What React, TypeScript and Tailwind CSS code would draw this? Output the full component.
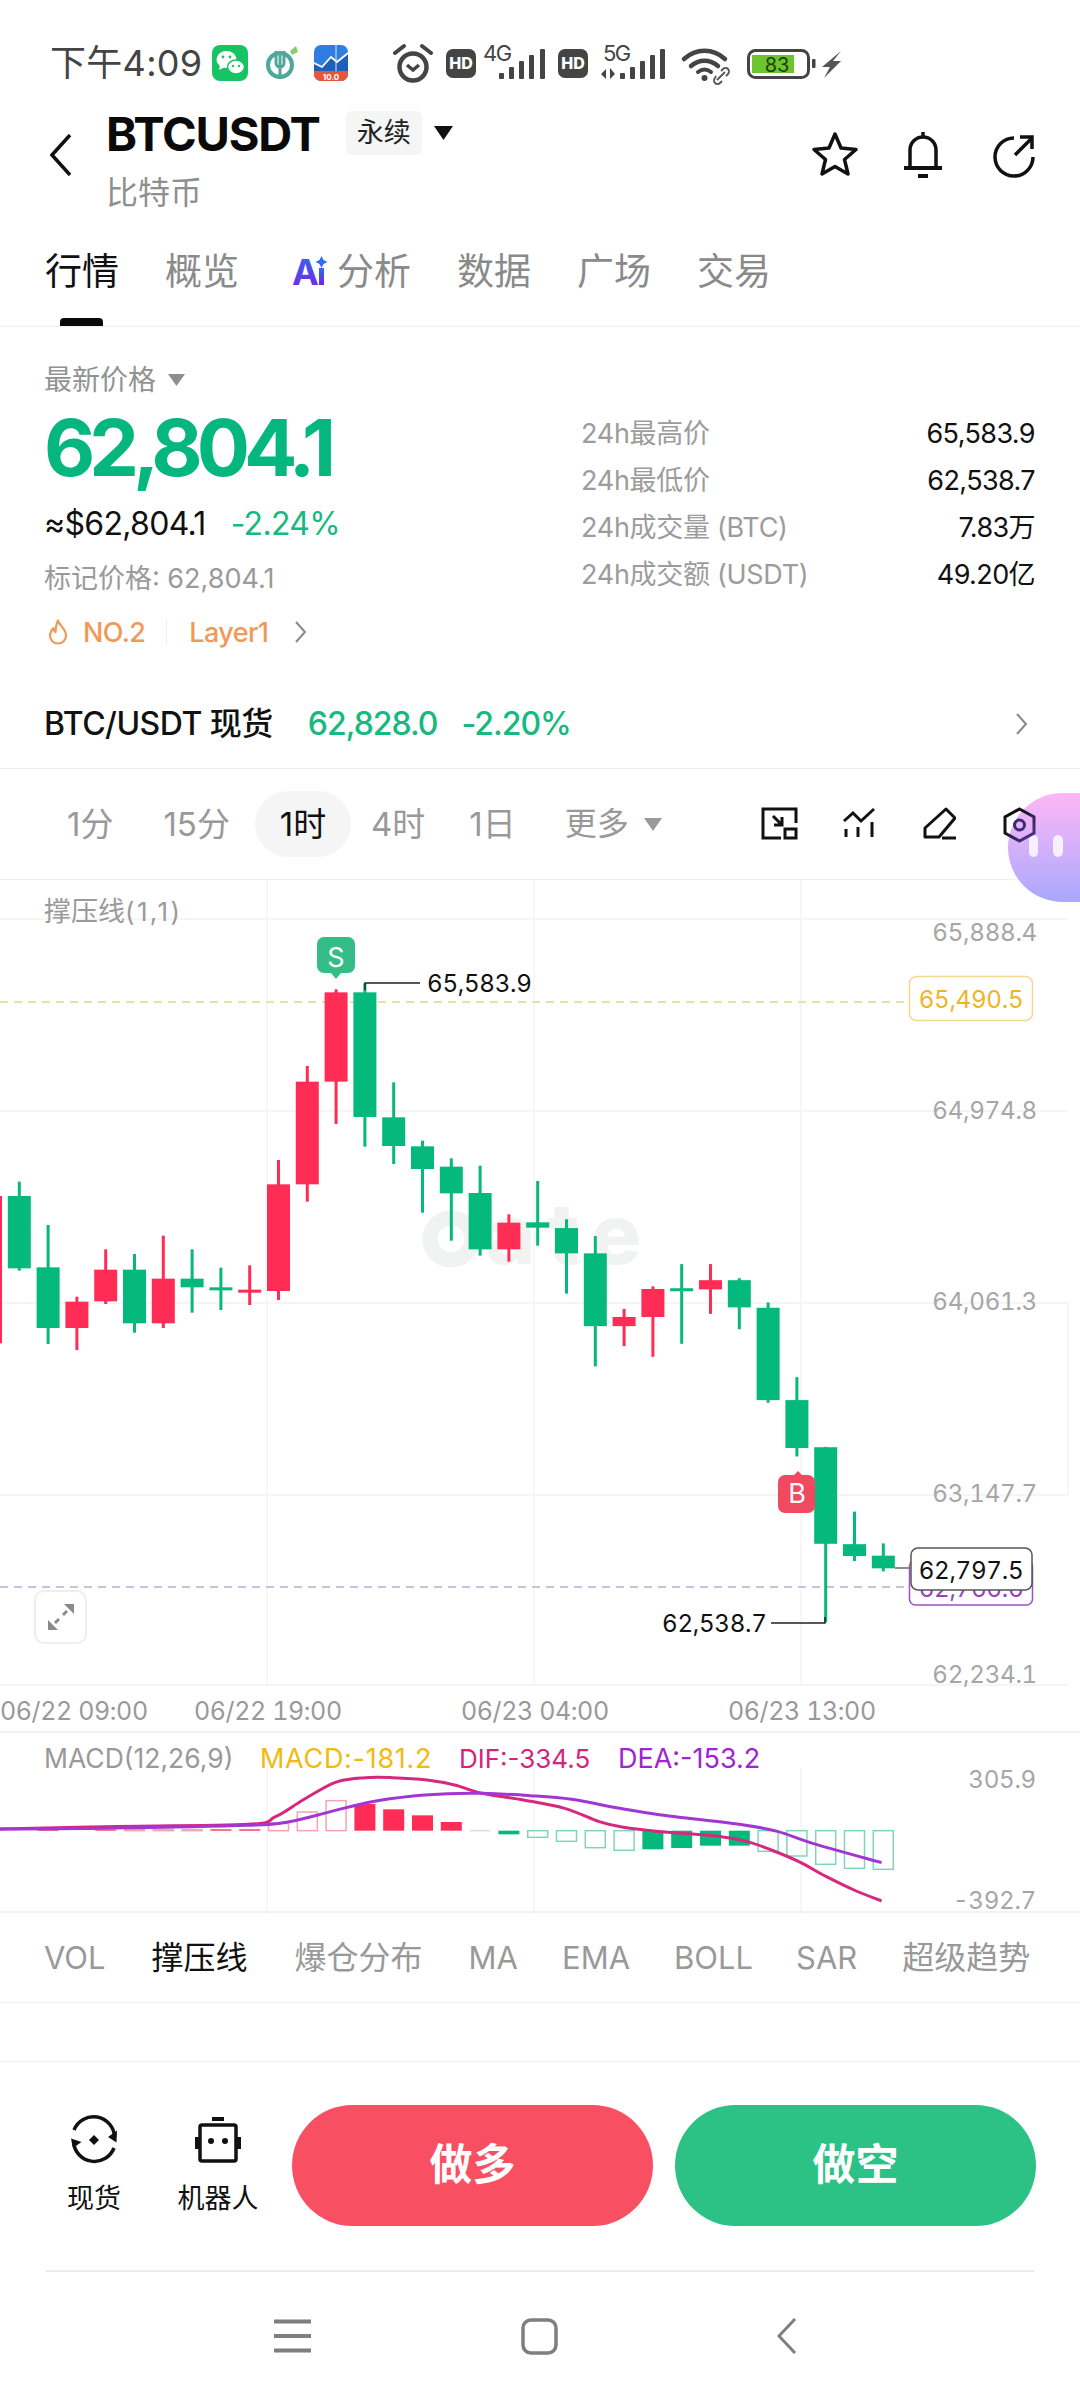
import React from "react";

const y3 = (z: number) => 900 + z / 3;
const y4 = (z: number) => 1130 + z / 2.61;
const cx = (i: number) => 19.3 + 28.8 * i;
const GREEN = "#05b87b";
const RED = "#ff2c55";

type C = [number, "g" | "r", number, number, number, number];
const raw3: C[] = [
  [-1, "r", 888, 888, 1330, 1345],
  [0, "g", 845, 888, 1105, 1112],
  [1, "g", 975, 1102, 1284, 1332],
  [2, "r", 1190, 1205, 1284, 1350],
  [3, "r", 1048, 1109, 1204, 1212],
  [4, "g", 1062, 1109, 1270, 1298],
  [5, "r", 1007, 1136, 1270, 1284],
  [6, "g", 1048, 1136, 1162, 1238],
  [7, "g", 1103, 1162, 1169, 1230],
  [8, "r", 1096, 1169, 1178, 1215],
  [9, "r", 780, 853, 1173, 1200],
  [10, "r", 498, 545, 853, 905],
  [11, "r", 268, 277, 545, 672],
  [12, "g", 250, 277, 651, 740],
  [13, "g", 547, 652, 738, 792],
  [14, "g", 722, 739, 807, 938],
  [15, "g", 775, 800, 880, 1022],
  [16, "g", 797, 879, 1048, 1067],
  [17, "r", 943, 968, 1048, 1085],
  [18, "g", 843, 967, 983, 1037],
];
const raw4: C[] = [
  [19, "g", 233, 256, 322, 427],
  [20, "g", 277, 322, 512, 617],
  [21, "r", 467, 488, 512, 564],
  [22, "r", 408, 415, 488, 592],
  [23, "g", 350, 413, 420, 558],
  [24, "r", 350, 392, 416, 480],
  [25, "g", 387, 392, 463, 520],
  [26, "g", 450, 464, 705, 712],
  [27, "g", 645, 705, 830, 852],
  [28, "g", 827, 828, 1080, 1285],
  [29, "g", 996, 1081, 1112, 1125],
  [30, "g", 1079, 1111, 1144, 1152],
];
const candles = [
  ...raw3.map(([i, c, a, b, d, e]) => ({ i, c, a: y3(a), b: y3(b), d: y3(d), e: y3(e) })),
  ...raw4.map(([i, c, a, b, d, e]) => ({ i, c, a: y4(a), b: y4(b), d: y4(d), e: y4(e) })),
];

const my = (z: number) => 1680 + z / 3;
const mx = (z: number) => z / 1.452;
const line = (pts: number[][]) => {
  const p = pts.map(([x, y]) => [mx(x), my(y)]);
  let d = `M${p[0][0]} ${p[0][1]}`;
  for (let i = 0; i < p.length - 1; i++) {
    const p0 = p[Math.max(0, i - 1)], p1 = p[i], p2 = p[i + 1], p3 = p[Math.min(p.length - 1, i + 2)];
    d += ` C${p1[0] + (p2[0] - p0[0]) / 6} ${p1[1] + (p2[1] - p0[1]) / 6} ${p2[0] - (p3[0] - p1[0]) / 6} ${p2[1] - (p3[1] - p1[1]) / 6} ${p2[0]} ${p2[1]}`;
  }
  return d;
};
const dif = line([[0,447],[150,440],[360,433],[400,410],[440,360],[487,307],[530,293],[570,293],[620,300],[660,315],[700,340],[760,360],[820,385],[870,425],[905,442],[960,455],[1040,468],[1085,485],[1120,510],[1160,545],[1200,590],[1240,630],[1280,663]]);
const dea = line([[0,447],[150,445],[360,436],[420,425],[480,395],[540,365],[600,348],[650,341],[700,340],[770,347],[830,358],[900,385],[960,405],[1080,435],[1130,455],[1180,490],[1280,548]]);

const bars: [number, number, boolean][] = [
  [-1, 450, true],[1, 450, true],[3, 449, true],[4, 448, false],[5, 448, false],[6, 449, false],[7, 448, true],[8, 448, true],
  [9, 430, false],[10, 396, false],[11, 362, false],[12, 372, true],[13, 388, true],[14, 406, true],[15, 426, true],
  [17, 463, true],[18, 472, false],[19, 484, false],[20, 503, false],[21, 511, false],[22, 508, true],[23, 504, true],[24, 497, true],[25, 497, true],
  [26, 514, false],[27, 528, false],[28, 553, false],[29, 565, false],[30, 568, false],
];

function Chart() {
  const hLines = [919, 1111, 1303, 1495, 1685];
  const num = { fontSize: 24.2, letterSpacing: -0.3, className: "tabular-nums" };
  return (
    <svg width="1080" height="1033" viewBox="0 880 1080 1033" className="block shrink-0 overflow-visible">
      {hLines.map((y) => <line key={y} x1="0" x2="1068" y1={y} y2={y} stroke="#f2f2f2" strokeWidth="1.5" />)}
      {[267, 534, 801].map((x) => <line key={x} x1={x} x2={x} y1="880" y2="1685" stroke="#f4f4f4" strokeWidth="1.5" />)}
      {[267, 534, 801].map((x) => <line key={x} x1={x} x2={x} y1="1768" y2="1913" stroke="#f4f4f4" strokeWidth="1.5" />)}
      <line x1="1068" x2="1068" y1="1303" y2="1495" stroke="#f4f4f4" strokeWidth="1.5" />
      <line x1="0" x2="1080" y1="1732" y2="1732" stroke="#eeeeee" strokeWidth="1.5" />
      <line x1="0" x2="1080" y1="1912" y2="1912" stroke="#eeeeee" strokeWidth="1.5" />

      {/* watermark */}
      <circle cx="451" cy="1239" r="21" fill="none" stroke="#f1f2f2" strokeWidth="15" />
      <text x="486" y="1264" fontSize="84" fontWeight="800" letterSpacing="12" fill="#f1f2f2">ate</text>

      <text x="44" y="921" fontSize="27" fill="#9a9a9a">撑压线<tspan fontSize="26" letterSpacing="2.400">(1,1)</tspan></text>
      <line x1="0" x2="908" y1="1002" y2="1002" stroke="#dada84" strokeWidth="1.5" strokeDasharray="8 6" />
      <line x1="0" x2="908" y1="1587" y2="1587" stroke="#c9a5d8" strokeWidth="1.5" strokeDasharray="8 6" />
      <line x1="895" x2="910" y1="1568" y2="1568" stroke="#666" strokeWidth="1.5" />

      {candles.map((c) => {
        const col = c.c === "g" ? GREEN : RED;
        const x = cx(c.i);
        return (
          <g key={c.i}>
            <rect x={x - 1.5} y={c.a} width="3" height={c.e - c.a} fill={col} />
            <rect x={x - 11.5} y={c.b} width="23" height={Math.max(3, c.d - c.b)} fill={col} />
          </g>
        );
      })}

      {/* S marker */}
      <path d="M324 937h24a7 7 0 0 1 7 7v22a7 7 0 0 1-7 7h-7l-5 6-5-6h-7a7 7 0 0 1-7-7v-22a7 7 0 0 1 7-7z" fill="#36bd87" />
      <text x="336" y="967" textAnchor="middle" fontSize="27" fill="#fff">S</text>
      <path d="M365 990v-7h55" fill="none" stroke="#222" strokeWidth="1.5" />
      <text x="427" y="992" {...num} fill="#111">65,583.9</text>

      {/* B marker */}
      <path d="M785 1475h9l4-4 4 4h6a7 7 0 0 1 7 7v24a7 7 0 0 1-7 7h-23a7 7 0 0 1-7-7v-24a7 7 0 0 1 7-7z" fill="#ef4a60" />
      <text x="797" y="1503" textAnchor="middle" fontSize="27" fill="#fff">B</text>
      <path d="M825 1617v6h-54" fill="none" stroke="#222" strokeWidth="1.5" />
      <text x="662" y="1632" {...num} fill="#111">62,538.7</text>

      {/* axis labels */}
      {([["65,888.4", 941], ["64,974.8", 1119], ["64,061.3", 1310], ["63,147.7", 1502], ["62,234.1", 1683]] as [string, number][]).map(([t, y]) => (
        <text key={t} x="1037" y={y} textAnchor="end" {...num} fill="#a6a6a6">{t}</text>
      ))}

      <rect x="909.5" y="976.5" width="123" height="44" rx="7" fill="#fff" stroke="#f5d88f" strokeWidth="1.5" />
      <text x="971" y="1008" textAnchor="middle" {...num} fill="#f0b429">65,490.5</text>

      <rect x="909.5" y="1560" width="123" height="45" rx="6" fill="#fff" stroke="#a04fc4" strokeWidth="1.5" />
      <text x="971" y="1597" textAnchor="middle" {...num} fill="#9a3fc0">62,766.6</text>
      <rect x="911" y="1548" width="121" height="42" rx="7" fill="#fff" stroke="#555" strokeWidth="1.5" />
      <text x="971" y="1579" textAnchor="middle" {...num} fill="#111">62,797.5</text>

      {/* time axis */}
      {([["06/22 09:00", 0], ["06/22 19:00", 194], ["06/23 04:00", 461], ["06/23 13:00", 728]] as [string, number][]).map(([t, x]) => (
        <text key={t} x={x} y="1720" fontSize="25" letterSpacing="-0.4" className="tabular-nums" fill="#999">{t}</text>
      ))}

      {/* MACD */}
      <text x="44" y="1768" fontSize="26.500" fill="#999">MACD(12,26,9)</text>
      <text x="260" y="1768" fontSize="27" letterSpacing="0.7" fill="#f2b90f">MACD:-181.2</text>
      <text x="459" y="1768" fontSize="26" fill="#d4247f">DIF:-334.5</text>
      <text x="618" y="1768" fontSize="27" fill="#a024d0">DEA:-153.2</text>
      <text x="1036" y="1788" textAnchor="end" {...num} fill="#a6a6a6">305.9</text>
      <text x="1036" y="1909" textAnchor="end" {...num} fill="#a6a6a6">-392.7</text>
      <line x1={cx(16) - 10} x2={cx(16) + 10} y1={my(452)} y2={my(452)} stroke="#ddd" strokeWidth="1.5" />
      {bars.map(([i, z, f]) => {
        const up = z < 452;
        const col = up ? RED : GREEN;
        const top = up ? my(z) : my(452);
        const h = Math.abs(my(z) - my(452));
        return f ? (
          <rect key={i} x={cx(i) - 10.5} y={top} width="21" height={h} fill={col} />
        ) : (
          <rect key={i} x={cx(i) - 10} y={top} width="20" height={h} fill="none" stroke={up ? "#f5a3b5" : "#7fd6b6"} strokeWidth="1.5" />
        );
      })}
      <path d={dif} fill="none" stroke="#d8277f" strokeWidth="3" />
      <path d={dea} fill="none" stroke="#a136d2" strokeWidth="3" />
    </svg>
  );
}

function StatusIcons() {
  const Bars = ({ xs }: { xs: number[] }) => (
    <>
      {xs.map((x, i) => {
        const h = [6, 12, 18, 24, 30][i];
        return <rect key={x} x={x} y={79 - h} width="5" height={h} rx="1" fill="#444" />;
      })}
    </>
  );
  return (
    <svg width="450" height="60" viewBox="393 35 450 60" className="block">
      <circle cx="413" cy="67" r="13.500" fill="none" stroke="#444" strokeWidth="4.500" />
      <path d="M407 65l6 5 6-5" fill="none" stroke="#444" strokeWidth="3.500" />
      <path d="M395 53l9-7M431 53l-9-7" stroke="#444" strokeWidth="4" strokeLinecap="round" />
      <rect x="446" y="49" width="30" height="29" rx="7" fill="#444" />
      <text x="461" y="69" textAnchor="middle" fontSize="16" fontWeight="800" fill="#fff">HD</text>
      <text x="483" y="61" fontSize="22" letterSpacing="-1.500" fill="#444">4G</text>
      <Bars xs={[499, 509, 519, 529, 540]} />
      <rect x="558" y="49" width="30" height="29" rx="7" fill="#444" />
      <text x="573" y="69" textAnchor="middle" fontSize="16" fontWeight="800" fill="#fff">HD</text>
      <text x="603" y="61" fontSize="22" letterSpacing="-1.500" fill="#444">5G</text>
      <path d="M601 74l5-5v10zM610 68v11l5-5z" fill="#444" />
      <Bars xs={[620, 630, 640, 650, 660]} />
      <path d="M684 59c12-11 29-11 41 0" fill="none" stroke="#444" strokeWidth="4.500" strokeLinecap="round" />
      <path d="M691 66c8-7 19-7 27 0" fill="none" stroke="#444" strokeWidth="4.500" strokeLinecap="round" />
      <path d="M698 72c4-3 9-3 13 0" fill="none" stroke="#444" strokeWidth="4" strokeLinecap="round" />
      <circle cx="704.500" cy="78" r="3" fill="#444" />
      <path d="M717 80l8-8M716 76l-1 2a3.500 3.500 0 0 0 5 5l2-2M726 76l2-2a3.500 3.500 0 0 0-5-5l-2 2" fill="none" stroke="#555" strokeWidth="1.800" />
      <rect x="748.500" y="50.500" width="60" height="27" rx="7" fill="#fff" stroke="#444" strokeWidth="3" />
      <rect x="752" y="55" width="42" height="18" fill="#6cc52c" />
      <text x="777" y="72" textAnchor="middle" fontSize="20" fill="#1f3d10">83</text>
      <rect x="812" y="59" width="3.500" height="9" rx="1" fill="#444" />
      <path d="M841 51l-19 16h8l-6 11 17-17h-8z" fill="#555" />
    </svg>
  );
}

function StatusBar() {
  return (
    <div className="flex h-[100px] shrink-0 items-center pl-[50px] pt-[26px] text-[36px] leading-none text-[#444]">
      <span className="w-[160px] whitespace-nowrap tracking-[0.3px]">下午4:09</span>
      <svg width="36" height="36" viewBox="0 0 36 36" className="ml-[2px] block">
        <rect width="36" height="36" rx="8" fill="#17c464" />
        <ellipse cx="14.500" cy="14.500" rx="10" ry="8.500" fill="#fff" />
        <path d="M8 20l-1 5 6-3z" fill="#fff" />
        <ellipse cx="24" cy="22" rx="8.500" ry="7" fill="#fff" stroke="#17c464" strokeWidth="1.500" />
        <circle cx="11" cy="12" r="1.400" fill="#17c464" />
        <circle cx="18" cy="12" r="1.400" fill="#17c464" />
        <circle cx="21" cy="21" r="1.200" fill="#17c464" />
        <circle cx="27" cy="21" r="1.200" fill="#17c464" />
      </svg>
      <svg width="34" height="36" viewBox="0 0 34 36" className="ml-[18px] block">
        <circle cx="14" cy="20" r="12" fill="none" stroke="#4fa99b" strokeWidth="4" />
        <path d="M10 6v12a4 4 0 0 0 8 0V6M14 6v28" fill="none" stroke="#4fa99b" strokeWidth="3" />
        <path d="M24 6l6-5 2 6-6 3z" fill="#8ecb6b" />
      </svg>
      <svg width="34" height="36" viewBox="0 0 34 36" className="ml-[14px] block">
        <rect width="34" height="36" rx="7" fill="#2f7de0" />
        <path d="M0 18l8 4 9-10 6 5 11-9v21H0z" fill="#1f5fb8" />
        <path d="M0 18l8 4 9-10 6 5 11-9" fill="none" stroke="#fff" strokeWidth="1.800" />
        <path d="M22 0v27" stroke="#dce9fb" strokeWidth="1" />
        <path d="M0 26h34v3a7 7 0 0 1-7 7H7a7 7 0 0 1-7-7z" fill="#e9553a" />
        <text x="17" y="34.500" textAnchor="middle" fontSize="8" fontWeight="700" fill="#fff">10.0</text>
      </svg>
      <div className="ml-[45px] mt-[4px]">
        <StatusIcons />
      </div>
    </div>
  );
}

function Header() {
  return (
    <div className="flex h-[120px] shrink-0 pl-[50px] pr-[45px]">
      <svg width="22" height="42" viewBox="0 0 22 42" className="mt-[34px] block shrink-0">
        <path d="M20 1L2 21l18 20" fill="none" stroke="#111" strokeWidth="3.500" />
      </svg>
      <div className="ml-[34px] flex flex-col">
        <div className="mt-[10px] flex h-[46px] items-center">
          <span className="text-[47px] font-bold leading-none tracking-[-1.2px] text-[#0a0a0a]">BTCUSDT</span>
          <span className="ml-[26px] flex h-[44px] w-[76px] items-center justify-center rounded-[6px] bg-[#f5f5f5] text-[27px] text-[#222]">永续</span>
          <svg width="19" height="14" viewBox="0 0 19 14" className="ml-[12px] block"><path d="M0 0h19L9.500 14z" fill="#111" /></svg>
        </div>
        <span className="mt-[17px] text-[32px] leading-[40px] text-[#8f8f8f]">比特币</span>
      </div>
      <div className="ml-auto mt-[30px] flex items-start">
        <svg width="48" height="48" viewBox="0 0 48 48" className="block">
          <path d="M24 4l6 14 15 1.500-11.500 10L37 44 24 36.500 11 44l3.500-14.500L3 19.500 18 18z" fill="none" stroke="#111" strokeWidth="3.500" strokeLinejoin="round" />
        </svg>
        <svg width="44" height="50" viewBox="0 0 44 50" className="ml-[42px] block">
          <path d="M22 2v4M9 38V20a13 13 0 0 1 26 0v18" fill="none" stroke="#111" strokeWidth="3.500" />
          <path d="M3 38h38" stroke="#111" strokeWidth="4" />
          <path d="M17 44h10v4H17z" fill="#111" />
        </svg>
        <svg width="42" height="44" viewBox="0 0 42 44" className="ml-[48px] mt-[4px] block">
          <path d="M21 4A19 19 0 1 0 40 23" fill="none" stroke="#111" strokeWidth="3.500" />
          <path d="M22 21L38 5M27 3h12v12" fill="none" stroke="#111" strokeWidth="3.500" />
        </svg>
      </div>
    </div>
  );
}

function Tabs() {
  return (
    <div className="flex h-[107px] shrink-0 flex-col border-b border-[#f0f0f0]">
      <div className="mt-[31px] flex h-[40px] items-center gap-[46px] pl-[45px] text-[37px] leading-none text-[#8a8a8a]">
        <span className="text-[#111]">行情</span>
        <span>概览</span>
        <span className="ml-[7px] flex items-center gap-[9px]">
          <svg width="36" height="30" viewBox="0 0 36 30" className="block overflow-visible">
            <defs>
              <linearGradient id="aig" x1="0" y1="0" x2="0" y2="1">
                <stop offset="0" stopColor="#2f6cf0" />
                <stop offset="1" stopColor="#7a22e0" />
              </linearGradient>
            </defs>
            <text x="0" y="29" fontSize="36" fontWeight="700" fill="url(#aig)">A</text>
            <rect x="27" y="12" width="5" height="17" fill="url(#aig)" />
            <path d="M29.500 0l2 4 4 2-4 2-2 4-2-4-4-2 4-2z" fill="#2f6cf0" />
          </svg>
          分析
        </span>
        <span>数据</span>
        <span>广场</span>
        <span>交易</span>
      </div>
      <div className="ml-[60px] mt-auto h-[8px] w-[43px] rounded-t-[4px] bg-[#0a0a0a]" />
    </div>
  );
}

function Stat({ label, value }: { label: string; value: string }) {
  return (
    <div className="flex h-[47px] items-center justify-between text-[27px] leading-none">
      <span className="tracking-[-0.3px] text-[#9c9c9c]">{label}</span>
      <span className="tracking-[-0.6px] text-[#111]">{value}</span>
    </div>
  );
}

function Quote() {
  return (
    <div className="flex h-[352px] shrink-0 pl-[44px]">
      <div className="flex w-[537px] flex-col">
        <div className="mt-[33px] flex h-[40px] items-center text-[28px] text-[#929292]">
          最新价格
          <svg width="17" height="12" viewBox="0 0 17 12" className="ml-[12px] block"><path d="M0 0h17L8.500 12z" fill="#8e8e8e" /></svg>
        </div>
        <div className="mt-[7px] h-[80px] text-[79px] font-bold leading-[80px] tracking-[-6px] text-[#06b77d]">62,804.1</div>
        <div className="mt-[17px] flex h-[40px] items-center gap-[25px] text-[32px] leading-none tracking-[-0.7px]">
          <span className="text-[#111]">≈$62,804.1</span>
          <span className="text-[#16b980]">-2.24%</span>
        </div>
        <div className="mt-[17px] h-[36px] text-[27px] leading-[36px] text-[#9a9a9a]">标记价格: 62,804.1</div>
        <div className="mt-[17px] flex h-[36px] items-center text-[27px] font-medium leading-none tracking-[-0.6px] text-[#f09a58]">
          <svg width="22" height="26" viewBox="0 0 22 26" className="ml-[3px] block">
            <path d="M11 1.500c1 5 8 8 8 15a8 8 0 0 1-16 0c0-4 2-6 3.500-7.500 0 2.500 1 3.500 2 4C9 9 9 5 11 1.500z" fill="none" stroke="#f09a58" strokeWidth="2.200" strokeLinejoin="round" />
          </svg>
          <span className="ml-[14px]">NO.2</span>
          <span className="ml-[21px] h-[26px] w-[1px] bg-[#f0f0f0]" />
          <span className="ml-[22px]">Layer1</span>
          <svg width="13" height="22" viewBox="0 0 13 22" className="ml-[26px] block"><path d="M2 1l9 10-9 10" fill="none" stroke="#888" strokeWidth="2" /></svg>
        </div>
      </div>
      <div className="flex w-[454px] flex-col pt-[83px]">
        <Stat label="24h最高价" value="65,583.9" />
        <Stat label="24h最低价" value="62,538.7" />
        <Stat label="24h成交量 (BTC)" value="7.83万" />
        <Stat label="24h成交额 (USDT)" value="49.20亿" />
      </div>
    </div>
  );
}

function SpotRow() {
  return (
    <div className="flex h-[90px] shrink-0 items-center border-b border-[#eeeeee] pl-[44px] pr-[52px] text-[32px] leading-none">
      <span className="font-medium tracking-[-0.5px] text-[#111]">BTC/USDT 现货</span>
      <span className="ml-[35px] font-medium tracking-[-1px] text-[#16b980]">62,828.0</span>
      <span className="ml-[24px] font-medium tracking-[-1px] text-[#16b980]">-2.20%</span>
      <svg width="12" height="24" viewBox="0 0 12 24" className="ml-auto block"><path d="M1 2l9 10-9 10" fill="none" stroke="#888" strokeWidth="2" /></svg>
    </div>
  );
}

function Periods() {
  return (
    <div className="relative flex h-[111px] shrink-0 items-center border-b border-[#f0f0f0] pl-[67px] text-[33px] leading-none text-[#999]">
      <span>1分</span>
      <span className="ml-[50px]">15分</span>
      <span className="ml-[25px] flex h-[66px] w-[96px] items-center justify-center rounded-full bg-[#f5f5f5] text-[#111]">1时</span>
      <span className="ml-[20px]">4时</span>
      <span className="ml-[44px]">1日</span>
      <span className="ml-[49px] text-[32px]">更多</span>
      <svg width="18" height="13" viewBox="0 0 18 13" className="ml-[15px] block"><path d="M0 0h18L9 13z" fill="#999" /></svg>
      <div className="absolute left-[761px] top-[38px] z-20 flex items-start">
        <svg width="37" height="33" viewBox="0 0 37 33" className="block">
          <path d="M20 31H2V2h33v14M12 9l9 9M21 10v8h-8" fill="none" stroke="#111" strokeWidth="3" />
          <rect x="24" y="22" width="11" height="9" fill="none" stroke="#111" strokeWidth="3" />
        </svg>
        <svg width="32" height="31" viewBox="0 0 32 31" className="ml-[45px] block">
          <path d="M1 14l9-8 8 8L31 2" fill="none" stroke="#111" strokeWidth="3" />
          <path d="M3 22v8M15 20v10M29 15v15" stroke="#111" strokeWidth="3" />
        </svg>
        <svg width="33" height="33" viewBox="0 0 33 33" className="ml-[48px] block">
          <path d="M23 2l9 9-16 19H2v-9z" fill="none" stroke="#111" strokeWidth="3" strokeLinejoin="round" />
          <path d="M19 31h14" stroke="#111" strokeWidth="3" />
        </svg>
        <svg width="33" height="36" viewBox="0 0 33 36" className="ml-[47px] block">
          <defs>
            <linearGradient id="hexg" x1="0" y1="0" x2="1" y2="1">
              <stop offset="0.300" stopColor="#111" />
              <stop offset="0.800" stopColor="#46307f" />
            </linearGradient>
          </defs>
          <path d="M16.500 2L31 10v16l-14.500 8L2 26V10z" fill="none" stroke="url(#hexg)" strokeWidth="3" />
          <circle cx="16.500" cy="18" r="5" fill="none" stroke="#3a2a70" strokeWidth="3" />
        </svg>
      </div>
    </div>
  );
}

function Indicators() {
  return (
    <>
      <div className="flex h-[89px] w-[1030px] shrink-0 items-center overflow-hidden whitespace-nowrap pl-[44px] text-[31px] leading-none text-[#999]">
        <span>VOL</span>
        <span className="ml-[46px] text-[32px] text-[#111]">撑压线</span>
        <span className="ml-[47px] text-[32px]">爆仓分布</span>
        <span className="ml-[46px]">MA</span>
        <span className="ml-[44px]">EMA</span>
        <span className="ml-[44px]">BOLL</span>
        <span className="ml-[43px]">SAR</span>
        <span className="ml-[45px] text-[32px]">超级趋势</span>
      </div>
      <div className="h-[60px] shrink-0 border-y border-[#f0f0f0]" />
    </>
  );
}

function Actions() {
  return (
    <div className="flex h-[208px] shrink-0 pt-[43px]">
      <div className="ml-[54px] flex w-[80px] flex-col items-center pt-[12px] text-[27px] leading-none text-[#111]">
        <svg width="46" height="46" viewBox="0 0 46 46" className="block overflow-visible">
          <path d="M3 13A21 21 0 0 1 43.500 20" fill="none" stroke="#111" strokeWidth="3.500" />
          <path d="M43 31A21 21 0 0 1 2.500 25" fill="none" stroke="#111" strokeWidth="3.500" />
          <path d="M37 20l8.500 5.500 .5-12zM0 21.500l10.500 3.500-8.500 6z" fill="#111" />
          <path d="M23 18l5 5-5 5-5-5z" fill="#111" />
        </svg>
        <span className="mt-[22px]">现货</span>
      </div>
      <div className="ml-[34px] flex w-[100px] flex-col items-center pt-[12px] text-[27px] leading-none text-[#111]">
        <svg width="46" height="46" viewBox="0 0 46 46" className="block">
          <rect x="17" y="0" width="12" height="4" fill="#111" />
          <rect x="5" y="8" width="36" height="36" rx="2" fill="none" stroke="#111" strokeWidth="3.500" />
          <rect x="0" y="20" width="4" height="12" fill="#111" />
          <rect x="42" y="20" width="4" height="12" fill="#111" />
          <circle cx="16" cy="24" r="3" fill="#111" />
          <circle cx="30" cy="24" r="3" fill="#111" />
        </svg>
        <span className="mt-[22px]">机器人</span>
      </div>
      <div className="ml-[24px] flex h-[121px] w-[361px] items-center justify-center rounded-full bg-[#f94f63] pb-[3px] text-[43px] font-bold leading-none text-white">做多</div>
      <div className="ml-[22px] flex h-[121px] w-[361px] items-center justify-center rounded-full bg-[#2cc285] pb-[3px] text-[43px] font-bold leading-none text-white">做空</div>
    </div>
  );
}

function NavBar() {
  return (
    <div className="mx-[46px] flex h-[130px] items-center border-t-2 border-[#ececec] pl-[228px]">
      <svg width="37" height="34" viewBox="0 0 37 34" className="block">
        <path d="M0 2.500h37M0 17h37M0 31.500h37" stroke="#7f7f7f" strokeWidth="4" />
      </svg>
      <svg width="37" height="37" viewBox="0 0 37 37" className="ml-[210px] block">
        <rect x="2" y="2" width="33" height="33" rx="8" fill="none" stroke="#7f7f7f" strokeWidth="3.500" />
      </svg>
      <svg width="20" height="36" viewBox="0 0 20 36" className="ml-[219px] block">
        <path d="M18 1L2 18l16 17" fill="none" stroke="#7f7f7f" strokeWidth="3" />
      </svg>
    </div>
  );
}

export default function App() {
  return (
    <div className="relative flex h-[2400px] w-[1080px] flex-col overflow-hidden bg-white font-[Inter,'Noto_Sans_CJK_SC',sans-serif]">
      <StatusBar />
      <Header />
      <Tabs />
      <Quote />
      <SpotRow />
      <Periods />
      <Chart />
      <Indicators />
      <Actions />
      <NavBar />
      {/* expand button over the chart */}
      <div className="absolute left-[34px] top-[1590px] flex h-[54px] w-[53px] items-center justify-center rounded-[10px] border-2 border-[#eeeeee] bg-white">
        <svg width="28" height="28" viewBox="0 0 28 28" className="block">
          <path d="M17 1h10v10zM1 17v10h10z" fill="#8a8a8a" />
          <path d="M20 8l-4 4M12 16l-4 4" stroke="#8a8a8a" strokeWidth="3" />
        </svg>
      </div>
      {/* floating assistant */}
      <div className="absolute left-[1008px] top-[793px] h-[109px] w-[72px] rounded-l-[55px] bg-gradient-to-b from-[#fdb6f5] to-[#a9a8ff]">
        <div className="absolute left-[21px] top-[42px] h-[22px] w-[9px] rounded-full bg-white opacity-80" />
        <div className="absolute left-[45px] top-[42px] h-[22px] w-[10px] rounded-full bg-white opacity-80" />
      </div>
    </div>
  );
}
